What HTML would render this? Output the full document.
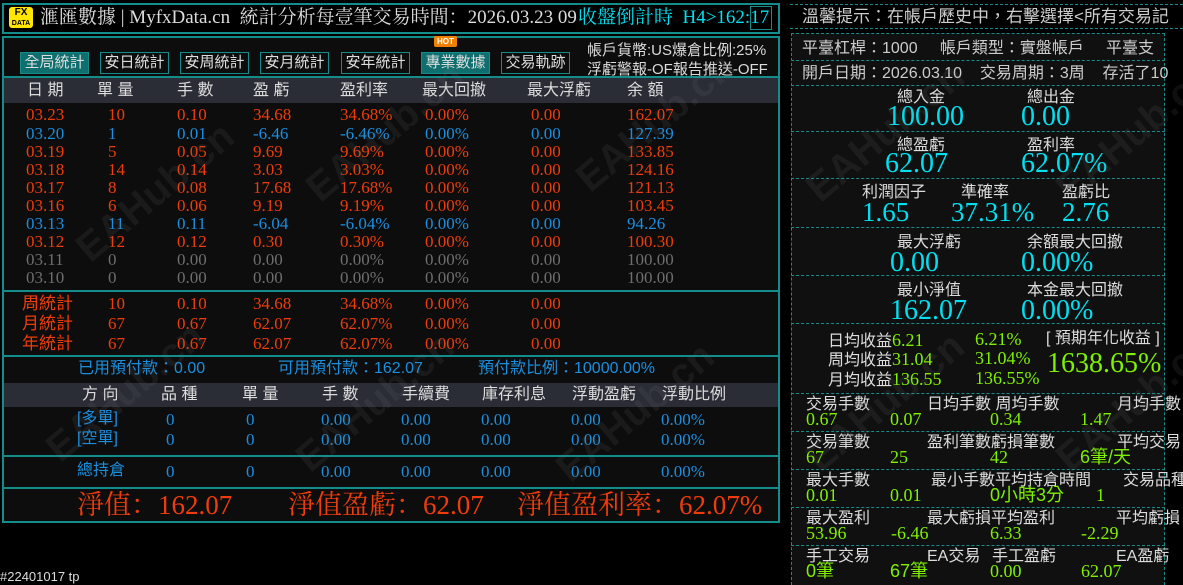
<!DOCTYPE html>
<html><head><meta charset="utf-8">
<style>
*{margin:0;padding:0;box-sizing:border-box}
body{width:1183px;height:585px;background:#000;position:relative;overflow:hidden;font-family:"Liberation Serif","Noto Serif CJK SC","Noto Sans CJK TC",serif;color:#ddd}
.a{position:absolute;white-space:nowrap;line-height:1}
.s{font-family:"Liberation Sans","Noto Sans CJK TC",sans-serif}
.r{color:#f03c0a}.b{color:#1a8fe0}.g{color:#6e6e6e}.w{color:#dcdcdc}.c{color:#00e0f0}.gr{color:#7ef000}
.f16{font-size:16px}.f15{font-size:15px}
.box{position:absolute;border:2px solid #148c8c}
.hl{position:absolute;height:2px;background:#148c8c}
.dl{position:absolute;height:0;border-top:1px dashed #178c8c}
.band{position:absolute;background:#2a2d36}
.btn{position:absolute;top:52px;height:22px;width:69px;border:1px solid #148c8c;font-size:15px;color:#ddd;text-align:center;line-height:20px;font-family:"Liberation Sans","Noto Sans CJK TC",sans-serif;overflow:hidden;white-space:nowrap}
.wm{position:absolute;font:bold 40px "Liberation Sans",sans-serif;color:rgba(120,120,120,0.12);transform:rotate(-40deg);white-space:nowrap}
.rg{font-size:18px}
</style></head><body>
<!-- title bar -->
<div class="box" style="left:2px;top:3px;width:778px;height:31px;border-width:2px"></div>
<div class="a s" style="left:9px;top:7px;width:24px;height:21px;background:#ffe600;border-radius:3px;color:#000;font:bold 10px 'Liberation Sans';text-align:center;line-height:10px;padding-top:1px">FX<br><span style="font-size:7px">DATA</span></div>
<div class="a w" style="left:40px;top:8px;font-size:19px">滙匯數據 | MyfxData.cn&nbsp; 統計分析每壹筆交易時間：2026.03.23 09</div>
<div class="a c" style="left:578px;top:8px;font-size:19px">收盤倒計時&nbsp; H4&gt;162:17</div>
<div class="a" style="left:750px;top:6px;width:22px;height:24px;border:1px solid #148c8c"></div>
<!-- left panel -->
<div class="box" style="left:2px;top:36px;width:778px;height:487px;background:#0d0d0d"></div>
<div class="btn" style="left:20px;background:#0f6e6e">全局統計</div>
<div class="btn" style="left:100px">安日統計</div>
<div class="btn" style="left:180px">安周統計</div>
<div class="btn" style="left:260px">安月統計</div>
<div class="btn" style="left:341px">安年統計</div>
<div class="btn" style="left:421px;background:#0f6e6e">專業數據</div>
<div class="a s" style="left:434px;top:36px;background:#f08000;color:#fff;font:bold 8px 'Liberation Sans';padding:1px 3px;border-radius:2px">HOT</div>
<div class="btn" style="left:501px">交易軌跡</div>
<div class="a s w" style="left:587px;top:43px;font-size:15px">帳戶貨幣:US爆倉比例:25%</div>
<div class="a s w" style="left:587px;top:62px;font-size:15px">浮虧警報-OF報告推送-OFF</div>
<div class="hl" style="left:2px;top:76px;width:778px"></div>
<div class="band" style="left:4px;top:78px;width:774px;height:25px"></div>
<div class="a s w f16" style="top:83px;left:27px">日 期</div>
<div class="a s w f16" style="top:83px;left:97px">單 量</div>
<div class="a s w f16" style="top:83px;left:177px">手 數</div>
<div class="a s w f16" style="top:83px;left:253px">盈 虧</div>
<div class="a s w f16" style="top:83px;left:340px">盈利率</div>
<div class="a s w f16" style="top:83px;left:422px">最大回撤</div>
<div class="a s w f16" style="top:83px;left:527px">最大浮虧</div>
<div class="a s w f16" style="top:83px;left:627px">余 額</div>

<div style="position:absolute;left:0;top:106px;font-size:17px">
<div class="a r" style="top:0px;left:26px">03.23</div><div class="a r" style="top:0;left:108px">10</div><div class="a r" style="top:0;left:177px">0.10</div><div class="a r" style="top:0;left:253px">34.68</div><div class="a r" style="top:0;left:340px">34.68%</div><div class="a r" style="top:0;left:425px">0.00%</div><div class="a r" style="top:0;left:531px">0.00</div><div class="a r" style="top:0;left:627px">162.07</div>
<div class="a b" style="top:19px;left:26px">03.20</div><div class="a b" style="top:19px;left:108px">1</div><div class="a b" style="top:19px;left:177px">0.01</div><div class="a b" style="top:19px;left:253px">-6.46</div><div class="a b" style="top:19px;left:340px">-6.46%</div><div class="a b" style="top:19px;left:425px">0.00%</div><div class="a b" style="top:19px;left:531px">0.00</div><div class="a b" style="top:19px;left:627px">127.39</div>
<div class="a r" style="top:37px;left:26px">03.19</div><div class="a r" style="top:37px;left:108px">5</div><div class="a r" style="top:37px;left:177px">0.05</div><div class="a r" style="top:37px;left:253px">9.69</div><div class="a r" style="top:37px;left:340px">9.69%</div><div class="a r" style="top:37px;left:425px">0.00%</div><div class="a r" style="top:37px;left:531px">0.00</div><div class="a r" style="top:37px;left:627px">133.85</div>
<div class="a r" style="top:55px;left:26px">03.18</div><div class="a r" style="top:55px;left:108px">14</div><div class="a r" style="top:55px;left:177px">0.14</div><div class="a r" style="top:55px;left:253px">3.03</div><div class="a r" style="top:55px;left:340px">3.03%</div><div class="a r" style="top:55px;left:425px">0.00%</div><div class="a r" style="top:55px;left:531px">0.00</div><div class="a r" style="top:55px;left:627px">124.16</div>
<div class="a r" style="top:73px;left:26px">03.17</div><div class="a r" style="top:73px;left:108px">8</div><div class="a r" style="top:73px;left:177px">0.08</div><div class="a r" style="top:73px;left:253px">17.68</div><div class="a r" style="top:73px;left:340px">17.68%</div><div class="a r" style="top:73px;left:425px">0.00%</div><div class="a r" style="top:73px;left:531px">0.00</div><div class="a r" style="top:73px;left:627px">121.13</div>
<div class="a r" style="top:91px;left:26px">03.16</div><div class="a r" style="top:91px;left:108px">6</div><div class="a r" style="top:91px;left:177px">0.06</div><div class="a r" style="top:91px;left:253px">9.19</div><div class="a r" style="top:91px;left:340px">9.19%</div><div class="a r" style="top:91px;left:425px">0.00%</div><div class="a r" style="top:91px;left:531px">0.00</div><div class="a r" style="top:91px;left:627px">103.45</div>
<div class="a b" style="top:109px;left:26px">03.13</div><div class="a b" style="top:109px;left:108px">11</div><div class="a b" style="top:109px;left:177px">0.11</div><div class="a b" style="top:109px;left:253px">-6.04</div><div class="a b" style="top:109px;left:340px">-6.04%</div><div class="a b" style="top:109px;left:425px">0.00%</div><div class="a b" style="top:109px;left:531px">0.00</div><div class="a b" style="top:109px;left:627px">94.26</div>
<div class="a r" style="top:127px;left:26px">03.12</div><div class="a r" style="top:127px;left:108px">12</div><div class="a r" style="top:127px;left:177px">0.12</div><div class="a r" style="top:127px;left:253px">0.30</div><div class="a r" style="top:127px;left:340px">0.30%</div><div class="a r" style="top:127px;left:425px">0.00%</div><div class="a r" style="top:127px;left:531px">0.00</div><div class="a r" style="top:127px;left:627px">100.30</div>
<div class="a g" style="top:145px;left:26px">03.11</div><div class="a g" style="top:145px;left:108px">0</div><div class="a g" style="top:145px;left:177px">0.00</div><div class="a g" style="top:145px;left:253px">0.00</div><div class="a g" style="top:145px;left:340px">0.00%</div><div class="a g" style="top:145px;left:425px">0.00%</div><div class="a g" style="top:145px;left:531px">0.00</div><div class="a g" style="top:145px;left:627px">100.00</div>
<div class="a g" style="top:163px;left:26px">03.10</div><div class="a g" style="top:163px;left:108px">0</div><div class="a g" style="top:163px;left:177px">0.00</div><div class="a g" style="top:163px;left:253px">0.00</div><div class="a g" style="top:163px;left:340px">0.00%</div><div class="a g" style="top:163px;left:425px">0.00%</div><div class="a g" style="top:163px;left:531px">0.00</div><div class="a g" style="top:163px;left:627px">100.00</div>
</div>
<div class="hl" style="left:2px;top:290px;width:778px"></div>
<div style="position:absolute;left:0;top:295px;font-size:17px">
<div class="a r s" style="top:0;left:22px">周統計</div><div class="a r" style="top:0;left:108px">10</div><div class="a r" style="top:0;left:177px">0.10</div><div class="a r" style="top:0;left:253px">34.68</div><div class="a r" style="top:0;left:340px">34.68%</div><div class="a r" style="top:0;left:425px">0.00%</div><div class="a r" style="top:0;left:531px">0.00</div>
<div class="a r s" style="top:20px;left:22px">月統計</div><div class="a r" style="top:20px;left:108px">67</div><div class="a r" style="top:20px;left:177px">0.67</div><div class="a r" style="top:20px;left:253px">62.07</div><div class="a r" style="top:20px;left:340px">62.07%</div><div class="a r" style="top:20px;left:425px">0.00%</div><div class="a r" style="top:20px;left:531px">0.00</div>
<div class="a r s" style="top:40px;left:22px">年統計</div><div class="a r" style="top:40px;left:108px">67</div><div class="a r" style="top:40px;left:177px">0.67</div><div class="a r" style="top:40px;left:253px">62.07</div><div class="a r" style="top:40px;left:340px">62.07%</div><div class="a r" style="top:40px;left:425px">0.00%</div><div class="a r" style="top:40px;left:531px">0.00</div>
</div>
<div class="hl" style="left:2px;top:355px;width:778px"></div>
<div class="a b s f16" style="top:361px;left:78px">已用預付款：0.00</div>
<div class="a b s f16" style="top:361px;left:278px">可用預付款：162.07</div>
<div class="a b s f16" style="top:361px;left:478px">預付款比例：10000.00%</div>
<div class="band" style="left:4px;top:383px;width:774px;height:24px"></div>
<div class="a s w f16" style="top:387px;left:82px">方 向</div>
<div class="a s w f16" style="top:387px;left:161px">品 種</div>
<div class="a s w f16" style="top:387px;left:242px">單 量</div>
<div class="a s w f16" style="top:387px;left:322px">手 數</div>
<div class="a s w f16" style="top:387px;left:402px">手續費</div>
<div class="a s w f16" style="top:387px;left:482px">庫存利息</div>
<div class="a s w f16" style="top:387px;left:572px">浮動盈虧</div>
<div class="a s w f16" style="top:387px;left:662px">浮動比例</div>
<div style="position:absolute;left:0;top:411px;font-size:17px">
<div class="a b s" style="top:0;left:77px;font-size:16px">[多單]</div><div class="a b" style="top:0;left:166px">0</div><div class="a b" style="top:0;left:246px">0</div><div class="a b" style="top:0;left:321px">0.00</div><div class="a b" style="top:0;left:401px">0.00</div><div class="a b" style="top:0;left:481px">0.00</div><div class="a b" style="top:0;left:571px">0.00</div><div class="a b" style="top:0;left:661px">0.00%</div>
<div class="a b s" style="top:20px;left:77px;font-size:16px">[空單]</div><div class="a b" style="top:20px;left:166px">0</div><div class="a b" style="top:20px;left:246px">0</div><div class="a b" style="top:20px;left:321px">0.00</div><div class="a b" style="top:20px;left:401px">0.00</div><div class="a b" style="top:20px;left:481px">0.00</div><div class="a b" style="top:20px;left:571px">0.00</div><div class="a b" style="top:20px;left:661px">0.00%</div>
</div>
<div class="hl" style="left:2px;top:455px;width:778px"></div>
<div style="position:absolute;left:0;top:463px;font-size:17px">
<div class="a b s" style="top:0;left:77px;font-size:16px">總持倉</div><div class="a b" style="top:0;left:166px">0</div><div class="a b" style="top:0;left:246px">0</div><div class="a b" style="top:0;left:321px">0.00</div><div class="a b" style="top:0;left:401px">0.00</div><div class="a b" style="top:0;left:481px">0.00</div><div class="a b" style="top:0;left:571px">0.00</div><div class="a b" style="top:0;left:661px">0.00%</div>
</div>
<div class="hl" style="left:2px;top:487px;width:778px"></div>
<div class="a r" style="top:492px;left:77px;font-size:27px">淨值：162.07</div>
<div class="a r" style="top:492px;left:288px;font-size:27px">淨值盈虧：62.07</div>
<div class="a r" style="top:492px;left:517px;font-size:27px">淨值盈利率：62.07%</div>
<div class="a s w" style="top:570px;left:0;font-size:13px">#22401017 tp</div>

<!-- right panel -->
<div class="a" style="left:790px;top:4px;width:393px;height:25px;border-top:1px dashed #178c8c;border-bottom:1px dashed #178c8c"></div>
<div class="a s w" style="left:802px;top:8px;font-size:17px;color:#ccc">溫馨提示：在帳戶歷史中，右擊選擇&lt;所有交易記</div>
<div class="a" style="left:791px;top:33px;width:374px;height:552px;background:#101010;border-left:1px dashed #178c8c;border-right:1px dashed #178c8c;border-top:1px dashed #178c8c"></div>
<div class="a s" style="left:802px;top:41px;font-size:16px;color:#ccc">平臺杠桿：1000&nbsp;&nbsp;&nbsp;&nbsp;&nbsp;帳戶類型：實盤帳戶&nbsp;&nbsp;&nbsp;&nbsp;&nbsp;平臺支</div>
<div class="dl" style="left:791px;top:60px;width:374px"></div>
<div class="a s" style="left:802px;top:66px;font-size:16px;color:#ccc">開戶日期：2026.03.10&nbsp;&nbsp;&nbsp;&nbsp;交易周期：3周&nbsp;&nbsp;&nbsp;&nbsp;存活了10</div>
<div class="dl" style="left:791px;top:85px;width:374px"></div>

<div class="a s w f16" style="left:897px;top:90px">總入金</div><div class="a s w f16" style="left:1027px;top:90px">總出金</div>
<div class="a c" style="left:887px;top:103px;font-size:28px">100.00</div><div class="a c" style="left:1021px;top:103px;font-size:28px">0.00</div>
<div class="dl" style="left:791px;top:131px;width:374px"></div>
<div class="a s w f16" style="left:897px;top:138px">總盈虧</div><div class="a s w f16" style="left:1027px;top:138px">盈利率</div>
<div class="a c" style="left:885px;top:150px;font-size:28px">62.07</div><div class="a c" style="left:1021px;top:150px;font-size:28px">62.07%</div>
<div class="dl" style="left:791px;top:178px;width:374px"></div>
<div class="a s w f16" style="left:862px;top:185px">利潤因子</div><div class="a s w f16" style="left:961px;top:185px">準確率</div><div class="a s w f16" style="left:1062px;top:185px">盈虧比</div>
<div class="a c" style="left:862px;top:199px;font-size:27px">1.65</div><div class="a c" style="left:951px;top:199px;font-size:27px">37.31%</div><div class="a c" style="left:1062px;top:199px;font-size:27px">2.76</div>
<div class="dl" style="left:791px;top:227px;width:374px"></div>
<div class="a s w f16" style="left:897px;top:235px">最大浮虧</div><div class="a s w f16" style="left:1027px;top:235px">余額最大回撤</div>
<div class="a c" style="left:890px;top:249px;font-size:28px">0.00</div><div class="a c" style="left:1021px;top:249px;font-size:28px">0.00%</div>
<div class="dl" style="left:791px;top:275px;width:374px"></div>
<div class="a s w f16" style="left:897px;top:283px">最小淨值</div><div class="a s w f16" style="left:1027px;top:283px">本金最大回撤</div>
<div class="a c" style="left:890px;top:297px;font-size:28px">162.07</div><div class="a c" style="left:1021px;top:297px;font-size:28px">0.00%</div>
<div class="dl" style="left:791px;top:323px;width:374px"></div>
<div class="a s f16" style="left:828px;top:331px;color:#ddd">日均收益<span class="gr" style="font-family:'Liberation Serif';font-size:18px">6.21</span></div>
<div class="a s f16" style="left:828px;top:350px;color:#ddd">周均收益<span class="gr" style="font-family:'Liberation Serif';font-size:18px">31.04</span></div>
<div class="a s f16" style="left:828px;top:370px;color:#ddd">月均收益<span class="gr" style="font-family:'Liberation Serif';font-size:18px">136.55</span></div>
<div class="a gr rg" style="left:975px;top:330px">6.21%</div>
<div class="a gr rg" style="left:975px;top:349px">31.04%</div>
<div class="a gr rg" style="left:975px;top:369px">136.55%</div>
<div class="a s w f16" style="left:1046px;top:331px">[ 預期年化收益 ]</div>
<div class="a gr" style="left:1047px;top:350px;font-size:28px">1638.65%</div>
<div class="dl" style="left:791px;top:393px;width:374px"></div>
<div style="position:absolute;left:0;top:397px;font-size:16px">
<div class="a s w" style="left:806px;top:0">交易手數</div><div class="a s w" style="left:927px;top:0">日均手數 周均手數</div><div class="a s w" style="left:1117px;top:0">月均手數</div>
<div class="a gr rg" style="left:806px;top:13px">0.67</div><div class="a gr rg" style="left:890px;top:13px">0.07</div><div class="a gr rg" style="left:990px;top:13px">0.34</div><div class="a gr rg" style="left:1080px;top:13px">1.47</div>
</div>
<div class="dl" style="left:791px;top:431px;width:374px"></div>
<div style="position:absolute;left:0;top:435px;font-size:16px">
<div class="a s w" style="left:806px;top:0">交易筆數</div><div class="a s w" style="left:927px;top:0">盈利筆數虧損筆數</div><div class="a s w" style="left:1117px;top:0">平均交易</div>
<div class="a gr rg" style="left:806px;top:13px">67</div><div class="a gr rg" style="left:890px;top:13px">25</div><div class="a gr rg" style="left:990px;top:13px">42</div><div class="a gr s rg" style="left:1080px;top:13px">6筆/天</div>
</div>
<div class="dl" style="left:791px;top:469px;width:374px"></div>
<div style="position:absolute;left:0;top:473px;font-size:16px">
<div class="a s w" style="left:806px;top:0">最大手數</div><div class="a s w" style="left:931px;top:0">最小手數平均持倉時間</div><div class="a s w" style="left:1123px;top:0">交易品種</div>
<div class="a gr rg" style="left:806px;top:13px">0.01</div><div class="a gr rg" style="left:890px;top:13px">0.01</div><div class="a gr s rg" style="left:990px;top:13px">0小時3分</div><div class="a gr rg" style="left:1096px;top:13px">1</div>
</div>
<div class="dl" style="left:791px;top:507px;width:374px"></div>
<div style="position:absolute;left:0;top:511px;font-size:16px">
<div class="a s w" style="left:806px;top:0">最大盈利</div><div class="a s w" style="left:927px;top:0">最大虧損平均盈利</div><div class="a s w" style="left:1116px;top:0">平均虧損</div>
<div class="a gr rg" style="left:806px;top:13px">53.96</div><div class="a gr rg" style="left:891px;top:13px">-6.46</div><div class="a gr rg" style="left:990px;top:13px">6.33</div><div class="a gr rg" style="left:1081px;top:13px">-2.29</div>
</div>
<div class="dl" style="left:791px;top:545px;width:374px"></div>
<div style="position:absolute;left:0;top:549px;font-size:16px">
<div class="a s w" style="left:806px;top:0">手工交易</div><div class="a s w" style="left:927px;top:0">EA交易</div><div class="a s w" style="left:992px;top:0">手工盈虧</div><div class="a s w" style="left:1116px;top:0">EA盈虧</div>
<div class="a gr s rg" style="left:806px;top:13px">0筆</div><div class="a gr s rg" style="left:890px;top:13px">67筆</div><div class="a gr rg" style="left:990px;top:13px">0.00</div><div class="a gr rg" style="left:1081px;top:13px">62.07</div>
</div>
<!-- watermarks -->
<div class="wm" style="left:60px;top:170px">EAHub.cn</div>
<div class="wm" style="left:290px;top:110px">EAHub.cn</div>
<div class="wm" style="left:560px;top:100px">EAHub.cn</div>
<div class="wm" style="left:30px;top:370px">EAHub.cn</div>
<div class="wm" style="left:280px;top:380px">EAHub.cn</div>
<div class="wm" style="left:540px;top:390px">EAHub.cn</div>
<div class="wm" style="left:790px;top:110px">EAHub.cn</div>
<div class="wm" style="left:1040px;top:110px">EAHub.cn</div>
<div class="wm" style="left:790px;top:380px">EAHub.cn</div>
<div class="wm" style="left:1040px;top:380px">EAHub.cn</div>
</body></html>
